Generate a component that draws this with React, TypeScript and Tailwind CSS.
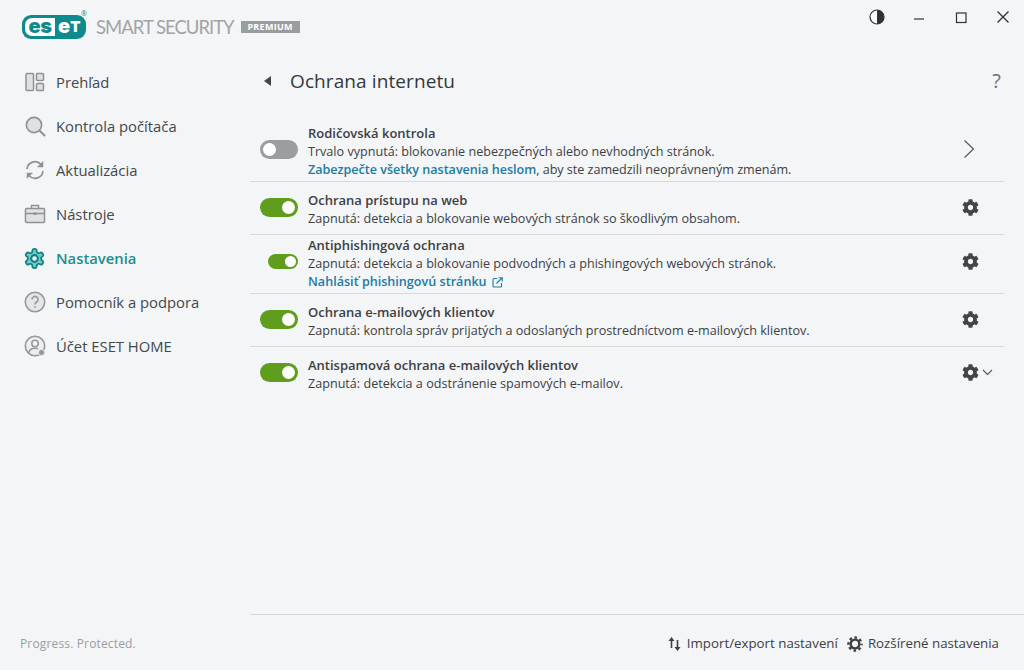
import React from 'react';
import { FaCog } from 'react-icons/fa';

const GEAR =
  'M12.22 2h-.44a2 2 0 0 0-2 2v.18a2 2 0 0 1-1 1.73l-.43.25a2 2 0 0 1-2 0l-.15-.08a2 2 0 0 0-2.73.73l-.22.38a2 2 0 0 0 .73 2.73l.15.1a2 2 0 0 1 1 1.72v.51a2 2 0 0 1-1 1.74l-.15.09a2 2 0 0 0-.73 2.73l.22.38a2 2 0 0 0 2.73.73l.15-.08a2 2 0 0 1 2 0l.43.25a2 2 0 0 1 1 1.73V20a2 2 0 0 0 2 2h.44a2 2 0 0 0 2-2v-.18a2 2 0 0 1 1-1.73l.43-.25a2 2 0 0 1 2 0l.15.08a2 2 0 0 0 2.73-.73l.22-.39a2 2 0 0 0-.73-2.73l-.15-.08a2 2 0 0 1-1-1.74v-.5a2 2 0 0 1 1-1.74l.15-.09a2 2 0 0 0 .73-2.73l-.22-.38a2 2 0 0 0-2.73-.73l-.15.08a2 2 0 0 1-2 0l-.43-.25a2 2 0 0 1-1-1.73V4a2 2 0 0 0-2-2z';

function OverviewIcon() {
  return (
    <svg width="22" height="22" viewBox="0 0 22 22" fill="#dfe1e3" stroke="#8f9295" strokeWidth="1.5">
      <rect x="2" y="2.5" width="7.5" height="17" rx="1" />
      <rect x="12.5" y="2.5" width="7" height="7" rx="1" />
      <rect x="12.5" y="12.5" width="7" height="7" rx="1" />
    </svg>
  );
}

function ScanIcon() {
  return (
    <svg width="22" height="22" viewBox="0 0 22 22" fill="#dfe1e3" stroke="#8f9295" strokeWidth="1.6">
      <circle cx="10" cy="10" r="7.6" />
      <path d="M16 16l4.5 4.5" strokeWidth="2" fill="none" strokeLinecap="round" />
    </svg>
  );
}

function UpdateIcon() {
  return (
    <svg width="22" height="22" viewBox="0 0 22 22" fill="none" stroke="#8f9295" strokeWidth="1.7">
      <path d="M3 10a8 8 0 0 1 14-4.5l1.5 1.5" />
      <path d="M19 12a8 8 0 0 1-14 4.5L3.500 15" />
      <path d="M19 2.500V8h-5.500z" fill="#8f9295" strokeWidth="0.5" />
      <path d="M3 19.500V14h5.500z" fill="#8f9295" strokeWidth="0.5" />
    </svg>
  );
}

function ToolsIcon() {
  return (
    <svg width="22" height="22" viewBox="0 0 22 22" fill="#dfe1e3" stroke="#8f9295" strokeWidth="1.5">
      <rect x="1.500" y="5.500" width="19" height="14" rx="1" />
      <path d="M7.500 5.500V2.500h7v3" fill="none" />
      <path d="M1.500 10.500h19" fill="none" />
      <path d="M9.500 9.500h3v2.500h-3z" fill="#8f9295" strokeWidth="0" />
    </svg>
  );
}

function SettingsIcon() {
  return (
    <svg width="23" height="23" viewBox="0 0 24 24" fill="#6fcaca" stroke="#14817f" strokeWidth="1.8">
      <path d={GEAR} />
      <circle cx="12" cy="12" r="3.500" fill="#f3f5f7" strokeWidth="2.200" />
    </svg>
  );
}

function HelpIcon() {
  return (
    <svg width="22" height="22" viewBox="0 0 22 22" fill="#e4e6e8" stroke="#97999c" strokeWidth="1.6">
      <circle cx="11" cy="11" r="9.700" />
      <path d="M8 8.500a3 3 0 1 1 4.600 2.500c-1 .7-1.600 1.200-1.600 2.500" fill="none" />
      <circle cx="11" cy="16" r="0.700" fill="#97999c" strokeWidth="0.600" />
    </svg>
  );
}

function AccountIcon() {
  return (
    <svg width="22" height="22" viewBox="0 0 22 22" fill="none" stroke="#97999c" strokeWidth="1.600">
      <circle cx="11" cy="11" r="9.700" fill="#eceef0" />
      <circle cx="11" cy="8.500" r="3.200" fill="#f3f5f7" />
      <path d="M4.800 18c.5-3.500 3-4.800 6.200-4.800 1.200 0 2.200.2 3 .5" />
      <circle cx="17.500" cy="17.500" r="3.200" fill="#97999c" stroke="#f3f5f7" strokeWidth="1" />
    </svg>
  );
}

const navItems = [
  { label: 'Prehľad', icon: <OverviewIcon /> },
  { label: 'Kontrola počítača', icon: <ScanIcon /> },
  { label: 'Aktualizácia', icon: <UpdateIcon /> },
  { label: 'Nástroje', icon: <ToolsIcon /> },
  { label: 'Nastavenia', icon: <SettingsIcon />, active: true },
  { label: 'Pomocník a podpora', icon: <HelpIcon /> },
  { label: 'Účet ESET HOME', icon: <AccountIcon /> },
];

function Toggle({ on, small }: { on: boolean; small?: boolean }) {
  if (small) {
    return (
      <div className="w-[30px] h-[15px] rounded-full bg-[#5f9e1c] flex items-center justify-end pr-[2px]">
        <div className="w-[11px] h-[11px] rounded-full bg-white" />
      </div>
    );
  }
  return (
    <div
      className={`w-[38px] h-[19px] rounded-full flex items-center px-[3px] ${
        on ? 'bg-[#5f9e1c] justify-end' : 'bg-[#9b9d9f] justify-start'
      }`}
    >
      <div className="w-[13px] h-[13px] rounded-full bg-white" />
    </div>
  );
}

function Row({
  title,
  toggle,
  small,
  action,
  className,
  children,
}: {
  title: string;
  toggle: boolean;
  small?: boolean;
  action: React.ReactNode;
  className: string;
  children: React.ReactNode;
}) {
  return (
    <div className={`flex items-center mr-[20px] ${className}`}>
      <div className="w-[58px] pl-[10px] pr-[10px] flex justify-end mb-1 shrink-0">
        <Toggle on={toggle} small={small} />
      </div>
      <div className="flex-1 text-[12.6px] leading-[18px] text-[#3c4043]">
        <div className="font-semibold text-[13px] mb-[1px]">{title}</div>
        {children}
      </div>
      <div className="w-[50px] flex items-center mb-1 shrink-0">{action}</div>
    </div>
  );
}

function RowGear() {
  return <FaCog size={17} className="text-[#3f4549] ml-[8px]" />;
}

export default function App() {
  return (
    <div className="w-[1024px] h-[670px] flex bg-[#f3f5f7] overflow-hidden font-['Open_Sans','Noto_Sans',sans-serif] text-[#3c4043]">
      {/* Sidebar */}
      <div className="w-[250px] shrink-0 flex flex-col">
        <div className="h-[60px] pl-[22px] pt-[15px] flex items-start">
          <div className="relative shrink-0">
            <div className="h-[24px] w-[64px] rounded-[9px] bg-[#0e8a8c] flex items-center overflow-hidden font-['Inter',sans-serif] font-black text-[20px] leading-none">
              <div className="ml-[3px] h-[18px] w-[30px] rounded-l-[7px] bg-white text-[#0e8a8c] flex items-center justify-center tracking-[-0.5px] pb-[2px]">
                es
              </div>
              <div className="ml-[3px] flex items-center text-white pb-[2px]">
                e<span className="text-[15px] pt-[1px]">T</span>
              </div>
            </div>
            <span className="absolute left-[59px] top-[-6px] text-[7px] leading-[10px] text-[#0e8a8c]">®</span>
          </div>
          <div className="shrink-0 ml-[10px] text-[18.5px] leading-[25px] text-[#a1a4a7] tracking-[-1px] font-['Lato',sans-serif] whitespace-nowrap">
            SMART SECURITY
          </div>
          <div className="shrink-0 ml-[7px] mt-[6px] h-[12px] w-[59px] bg-[#9a9da0] text-white text-[9px] leading-[12px] font-bold text-center tracking-[0.3px]">
            PREMIUM
          </div>
        </div>
        <div className="flex flex-col">
          {navItems.map((item) => (
            <div key={item.label} className="h-[44px] flex items-center pl-[23px]">
              <div className="w-[23px] flex justify-center">{item.icon}</div>
              <span
                className={`ml-[10px] text-[14.8px] whitespace-nowrap ${
                  item.active ? 'font-semibold text-[#1a8f8f]' : 'text-[#44484b]'
                }`}
              >
                {item.label}
              </span>
            </div>
          ))}
        </div>
        <div className="mt-auto h-[55px] pl-[20px] flex items-center text-[12px] text-[#9a9da0] tracking-[0.15px] pt-[2px]">
          Progress. Protected.
        </div>
      </div>

      {/* Main */}
      <div className="flex-1 flex flex-col min-w-0">
        <div className="h-[52px] flex items-start pt-[9px] justify-end">
          <svg width="16" height="16" viewBox="0 0 16 16" className="mr-[28px]">
            <circle cx="8" cy="8" r="7" fill="#fff" stroke="#2e3235" strokeWidth="1.200" />
            <path d="M8 1a7 7 0 0 1 0 14z" fill="#2e3235" />
          </svg>
          <svg width="12" height="18" viewBox="0 0 12 18" className="mr-[30px]">
            <path d="M1 10h10" stroke="#2e3235" strokeWidth="1.200" />
          </svg>
          <svg width="12" height="18" viewBox="0 0 12 18" className="mr-[29px]">
            <rect x="1.500" y="4" width="9.500" height="9.500" fill="none" stroke="#2e3235" strokeWidth="1.200" />
          </svg>
          <svg width="14" height="18" viewBox="0 0 14 18" className="mr-[14px]">
            <path d="M1.500 2.500l11 11M12.500 2.500l-11 11" stroke="#2e3235" strokeWidth="1.300" />
          </svg>
        </div>

        <div className="h-[58px] flex items-center pl-[13px] pr-[23px]">
          <svg width="10" height="12" viewBox="0 0 10 12">
            <path d="M8 1v10L1 6z" fill="#3f4549" />
          </svg>
          <h1 className="ml-[17px] text-[19px] font-medium text-[#33383b] tracking-[0.1px]">Ochrana internetu</h1>
          <span className="ml-auto text-[20px] text-[#6c7073] leading-none">?</span>
        </div>

        <div className="mt-[14px] flex-1">
          <Row
            title="Rodičovská kontrola"
            toggle={false}
            className="pb-[2px] border-b border-[#d6d8da]"
            action={
              <svg width="12" height="20" viewBox="0 0 12 20" className="ml-[9px] mb-[2px]">
                <path d="M1.500 1.500L10.500 10l-9 8.500" fill="none" stroke="#55595c" strokeWidth="1.200" />
              </svg>
            }
          >
            <div>
              <span className="font-medium">Trvalo vypnutá:</span> blokovanie nebezpečných alebo nevhodných stránok.
            </div>
            <div className="tracking-[-0.03px]">
              <span className="font-semibold text-[#1d7ba3]">Zabezpečte všetky nastavenia heslom</span>, aby ste
              zamedzili neoprávneným zmenám.
            </div>
          </Row>
          <Row
            title="Ochrana prístupu na web"
            toggle
            className="pt-[9px] pb-[6px] border-b border-[#d6d8da]"
            action={<RowGear />}
          >
            <div>
              <span className="font-medium">Zapnutá:</span> detekcia a blokovanie webových stránok so škodlivým
              obsahom.
            </div>
          </Row>
          <Row
            title="Antiphishingová ochrana"
            toggle
            small
            className="pt-[1px] pb-[2px] border-b border-[#d6d8da]"
            action={<RowGear />}
          >
            <div>
              <span className="font-medium">Zapnutá:</span> detekcia a blokovanie podvodných a phishingových webových
              stránok.
            </div>
            <div className="flex items-center font-semibold text-[#1d7ba3]">
              Nahlásiť phishingovú stránku
              <svg width="11" height="11" viewBox="0 0 11 11" className="ml-[5px]" fill="none" stroke="#1d7ba3" strokeWidth="1.100">
                <path d="M5 1.500H2a1 1 0 0 0-1 1V9a1 1 0 0 0 1 1h6.500a1 1 0 0 0 1-1V6" />
                <path d="M4.500 6.500L10 1M6.500 .7H10.300V4.500" />
              </svg>
            </div>
          </Row>
          <Row
            title="Ochrana e-mailových klientov"
            toggle
            className="pt-[9px] pb-[6px] border-b border-[#d6d8da]"
            action={<RowGear />}
          >
            <div>
              <span className="font-medium">Zapnutá:</span> kontrola správ prijatých a odoslaných prostredníctvom
              e-mailových klientov.
            </div>
          </Row>
          <Row
            title="Antispamová ochrana e-mailových klientov"
            toggle
            className="pt-[9px] pb-[6px]"
            action={
              <div className="flex items-center ml-[8px]">
                <FaCog size={17} className="text-[#3f4549]" />
                <svg width="11" height="7" viewBox="0 0 11 7" className="ml-[3px]">
                  <path d="M1 1l4.500 4.500L10 1" fill="none" stroke="#55595c" strokeWidth="1.100" />
                </svg>
              </div>
            }
          >
            <div>
              <span className="font-medium">Zapnutá:</span> detekcia a odstránenie spamových e-mailov.
            </div>
          </Row>
        </div>

        <div className="h-[56px] border-t border-[#d6d8da] flex items-center justify-end pr-[25px] text-[13.3px] font-medium text-[#3c4043] pt-[2px]">
          <svg width="13" height="16" viewBox="0 0 13 16" className="mr-[6px]" fill="#3c4043">
            <path d="M3.500 1L6.500 5H4.300v7H2.700V5H.5z" />
            <path d="M9.500 15L6.500 11H8.700V4h1.600v7h2.200z" />
          </svg>
          <span>Import/export nastavení</span>
          <svg width="16" height="16" viewBox="0 0 24 24" className="ml-[9px] mr-[5px]" fill="none" stroke="#3c4043">
            <circle cx="12" cy="12" r="6.500" strokeWidth="3.600" />
            <circle cx="12" cy="12" r="9.800" strokeWidth="3.600" strokeDasharray="3.900 3.800" strokeDashoffset="2" />
          </svg>
          <span>Rozšírené nastavenia</span>
        </div>
      </div>
    </div>
  );
}
